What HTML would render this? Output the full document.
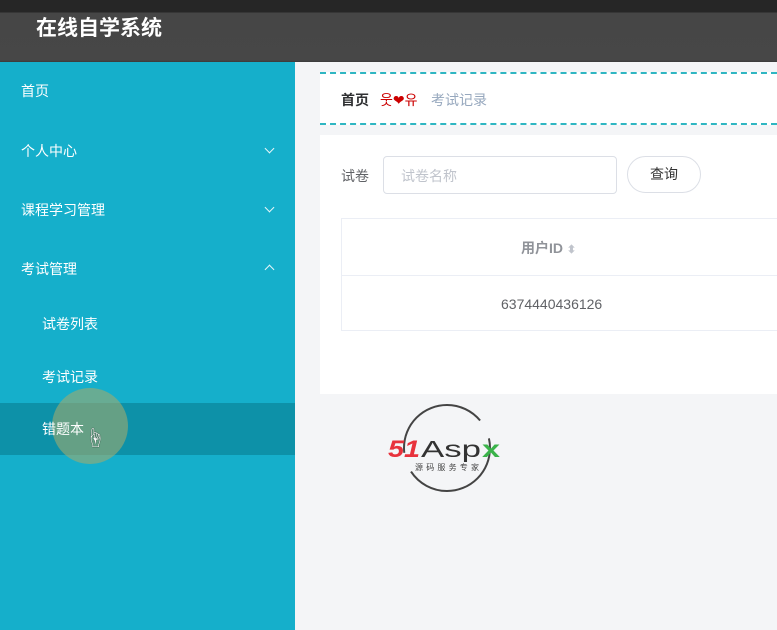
<!DOCTYPE html>
<html><head><meta charset="utf-8"><style>
*{margin:0;padding:0;box-sizing:border-box}
body{width:777px;height:630px;overflow:hidden;background:#f4f5f7;font-family:"Liberation Sans","Noto Sans CJK SC",sans-serif;position:relative}
.top{position:absolute;left:0;top:0;width:777px;height:62px;background:linear-gradient(#262626 0,#262626 12px,#464646 13px,#474747 60px,#3a3a3a 62px)}
.top h1{position:absolute;left:36px;top:12px;color:#fff;font-size:21px;font-weight:bold}
.side{position:absolute;left:0;top:62px;width:295px;height:568px;background:#15afcb}
.it{position:absolute;left:21px;color:#fff;font-size:14px}
.sub{left:42px}
.chev{position:absolute;right:22px;width:7px;height:7px;border-right:1.5px solid #e6f6f9;border-bottom:1.5px solid #e6f6f9}
.act{position:absolute;left:0;top:341px;width:295px;height:52px;background:#0d91a8}
.glow{position:absolute;left:52px;top:388px;width:76px;height:76px;border-radius:50%;background:rgba(160,170,110,.6)}
.crumb{position:absolute;left:320px;top:72px;width:457px;height:53px;background:#fff;border-top:2px dashed #2fb6c2;border-bottom:2px dashed #2fb6c2;font-size:14px}
.panel{position:absolute;left:320px;top:135px;width:457px;height:259px;background:#fff}
.inp{position:absolute;left:63px;top:21px;width:234px;height:38px;border:1px solid #dcdfe6;border-radius:4px;color:#c0c4cc;font-size:14px;padding:9px 17px}
.btn{position:absolute;left:307px;top:21px;width:74px;height:37px;border:1px solid #dcdfe6;border-radius:19px;font-size:14px;color:#333;text-align:center;line-height:35px}
.tbl{position:absolute;left:21px;top:83px;width:440px;height:113px;border:1px solid #ebeef5}
</style></head><body>
<div class="top"><h1>在线自学系统</h1></div>
<div class="side">
<div class="it" style="top:19px">首页</div>
<div class="it" style="top:79px">个人中心</div><div class="chev" style="top:83px;transform:rotate(45deg)"></div>
<div class="it" style="top:138px">课程学习管理</div><div class="chev" style="top:142px;transform:rotate(45deg)"></div>
<div class="it" style="top:197px">考试管理</div><div class="chev" style="top:204px;transform:rotate(-135deg)"></div>
<div class="it sub" style="top:252px">试卷列表</div>
<div class="it sub" style="top:305px">考试记录</div>
<div class="act"></div>
</div>
<div class="glow"></div>
<div class="it sub" style="top:419px;color:#fff">错题本</div>
<div style="position:absolute;left:85px;top:422px;font-size:20px;color:#fff;text-shadow:0 0 1px #000">☝</div>
<div class="crumb"><span style="position:absolute;left:21px;top:16px;font-weight:bold;color:#303133">首页</span><span style="position:absolute;left:60px;top:16px;color:#c00">웃❤유</span><span style="position:absolute;left:111px;top:16px;color:#97a8be">考试记录</span></div>
<div class="panel">
<span style="position:absolute;left:21px;top:31px;font-size:14px;color:#606266">试卷</span>
<div class="inp">试卷名称</div>
<div class="btn">查询</div>
<div class="tbl">
<div style="position:absolute;left:0;top:56px;width:100%;border-top:1px solid #ebeef5"></div>
<div style="position:absolute;left:179px;top:19px;font-size:14px;font-weight:bold;color:#909399">用户ID <span style="font-size:11px;color:#c0c4cc">⬍</span></div>
<div style="position:absolute;left:159px;top:77px;font-size:14px;color:#606266">6374440436126</div>
</div>
</div>
<svg style="position:absolute;left:386px;top:402px" width="130" height="92">
<circle cx="61" cy="46" r="43" fill="none" stroke="#444" stroke-width="2" stroke-dasharray="110 20"/>
<text x="2" y="55" font-size="24" font-weight="bold" font-style="italic" fill="#e8323c" font-family="Liberation Sans" textLength="32" lengthAdjust="spacingAndGlyphs">51</text>
<text x="35" y="55" font-size="23" fill="#333" font-family="Liberation Sans" textLength="60" lengthAdjust="spacingAndGlyphs">Asp</text>
<text x="96" y="55" font-size="23" font-weight="bold" fill="#3ab34a" font-family="Liberation Sans" textLength="18" lengthAdjust="spacingAndGlyphs">x</text>
<text x="29" y="68" font-size="8" fill="#444" font-family="Noto Sans CJK SC" textLength="64">源码服务专家</text>
</svg>
</body></html>
